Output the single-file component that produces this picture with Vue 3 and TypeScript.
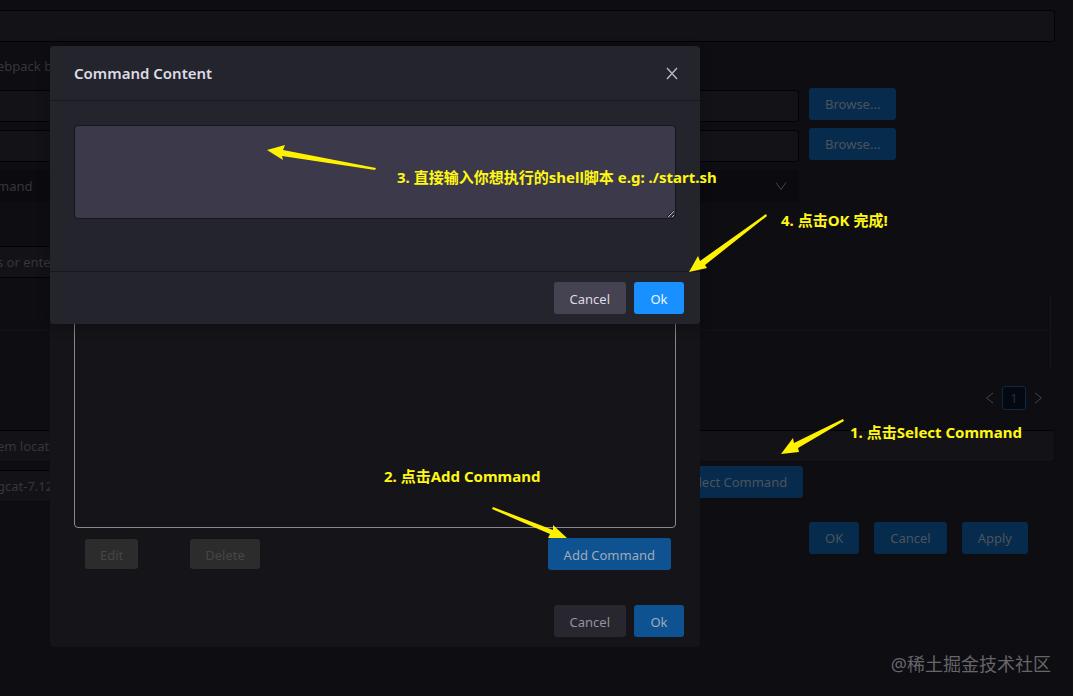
<script setup lang="ts">
import { ref } from 'vue'

interface Note {
  id: string
  text: string
}

const notes: Note[] = [
  { id: 'one', text: '1. 点击Select Command' },
  { id: 'two', text: '2. 点击Add Command' },
  { id: 'three', text: '3. 直接输入你想执行的shell脚本 e.g: ./start.sh' },
  { id: 'four', text: '4. 点击OK 完成!' },
]

const script = ref('')
const name = ref('')
const source = ref('')
const output = ref('')
const params = ref('s or ente')
const location = ref('em locat')
const version = ref('gcat-7.12')
</script>

<template>
  <div class="page">
    <form class="settings" @submit.prevent>
      <input v-model="name" class="field wide" aria-label="Name" />
      <p class="caption">ebpack b</p>
      <div class="row">
        <input v-model="source" class="field medium" aria-label="Source" />
        <button type="button" class="btn faint">Browse...</button>
      </div>
      <div class="row">
        <input v-model="output" class="field medium" aria-label="Output" />
        <button type="button" class="btn faint">Browse...</button>
      </div>
      <div class="select-wrap">
        <select class="select" aria-label="Type">
          <option>mand</option>
        </select>
        <svg class="chevron" viewBox="0 0 12 12" aria-hidden="true"><path d="M1 2.5 6 9.5 11 2.5" /></svg>
      </div>
      <input v-model="params" class="field short params" aria-label="Parameters" />
      <div class="grid">
        <div class="grid-head"></div>
        <div class="grid-body"></div>
      </div>
      <nav class="pager" aria-label="Pages">
        <button type="button" class="pager-step" aria-label="Previous">
          <svg viewBox="0 0 12 12"><path d="M9 1 2.5 6 9 11" /></svg>
        </button>
        <button type="button" class="pager-page">1</button>
        <button type="button" class="pager-step" aria-label="Next">
          <svg viewBox="0 0 12 12"><path d="M3 1 9.5 6 3 11" /></svg>
        </button>
      </nav>
      <input v-model="location" class="field wide soft" aria-label="Location" />
      <div class="row version-row">
        <input v-model="version" class="field version soft" aria-label="Version" />
        <button type="button" class="btn faint select-command">Select Command</button>
      </div>
      <div class="actions">
        <button type="button" class="btn faint">OK</button>
        <button type="button" class="btn faint">Cancel</button>
        <button type="button" class="btn faint">Apply</button>
      </div>
    </form>

    <section class="dialog list-dialog" role="dialog" aria-label="Select Command">
      <div class="command-list"></div>
      <div class="list-tools">
        <button type="button" class="btn disabled" disabled>Edit</button>
        <button type="button" class="btn disabled" disabled>Delete</button>
        <button type="button" class="btn dim add">Add Command</button>
      </div>
      <footer class="dialog-foot">
        <button type="button" class="btn dim-plain">Cancel</button>
        <button type="button" class="btn dim">Ok</button>
      </footer>
    </section>

    <section class="dialog content-dialog" role="dialog" aria-labelledby="content-title">
      <header class="dialog-head">
        <h2 id="content-title">Command Content</h2>
        <button type="button" class="close" aria-label="Close">
          <svg viewBox="0 0 12 14"><path d="M1 2 11 13M11 2 1 13" /></svg>
        </button>
      </header>
      <div class="dialog-body">
        <textarea v-model="script" class="script" aria-label="Command Content"></textarea>
      </div>
      <footer class="dialog-foot ruled">
        <button type="button" class="btn plain">Cancel</button>
        <button type="button" class="btn primary">Ok</button>
      </footer>
    </section>

    <svg class="arrows" width="1073" height="696" viewBox="0 0 1073 696" aria-hidden="true">
      <path d="M781 454 793 438 794 443 843 419 844 421 798 448 799 452Z" />
      <path d="M567 538 553 525 553 530 493 507 492 509 550 534 548 538Z" />
      <path d="M267 150 285 145 283 150 376 168 375 170 282 156 283 160Z" />
      <path d="M689 272 698 256 700 261 766 214 767 216 705 265 707 268Z" />
    </svg>
    <p v-for="note in notes" :key="note.id" class="note" :class="note.id">{{ note.text }}</p>
    <p class="watermark">@稀土掘金技术社区</p>
  </div>
</template>

<style>
html,
body,
#app {
  min-height: 100%;
  background: #0e0d12;
}
body {
  margin: 0;
  overflow: hidden;
}
</style>

<style scoped>
.page {
  position: relative;
  min-height: 100vh;
  box-sizing: border-box;
  overflow: hidden;
  background: #0e0d12;
  color: #36363b;
  font: 13px/20px "Noto Sans", "Noto Sans CJK SC", sans-serif;
}
button,
input,
select,
textarea {
  box-sizing: border-box;
  margin: 0;
  font: inherit;
  color: inherit;
}
p,
h2 {
  margin: 0;
}
.settings {
  display: flex;
  flex-direction: column;
  padding: 10px 18px 0 0;
}
.field {
  height: 32px;
  border: 1px solid #030206;
  border-left: 0;
  border-radius: 0 3px 3px 0;
  background: #131217;
  padding: 0;
}
.soft {
  border-right-color: #0b0a0f;
  border-bottom-color: #0b0a0f;
}
.field,
.select,
.caption {
  text-indent: -3px;
}
.wide {
  width: 100%;
}
.caption {
  padding: 14px 0 12px;
}
.row {
  display: flex;
  align-items: flex-start;
  gap: 10px;
  height: 40px;
}
.medium {
  width: 799px;
  margin-top: 2px;
}
.btn {
  height: 32px;
  min-width: 50px;
  padding: 0 16px;
  border: 0;
  border-radius: 3px;
  white-space: nowrap;
}
.dialog .btn {
  padding-top: 2px;
}
.faint {
  background: #072b4c;
  color: #4b545d;
}
.select-wrap {
  display: flex;
  align-items: center;
  width: 799px;
  height: 32px;
  margin-top: 2px;
}
.select {
  flex: 1;
  height: 32px;
  appearance: none;
  border: 0;
  border-radius: 3px;
  background: #0b0a0f;
  padding: 0;
}
.chevron {
  width: 12px;
  height: 12px;
  margin: 0 12px 0 -24px;
}
.chevron path,
.pager-step path {
  fill: none;
  stroke: #44444a;
  stroke-width: 1;
}
.short {
  width: 600px;
}
.params {
  margin-top: 44px;
}
.grid {
  margin: 17px 4px 0 0;
  border-right: 1px solid #17161b;
}
.grid-head {
  height: 35px;
  border-bottom: 1px solid #131217;
}
.grid-body {
  height: 37px;
}
.pager {
  display: flex;
  justify-content: flex-end;
  margin: 18px 5px 20px 0;
}
.pager-step,
.pager-page {
  width: 24px;
  height: 24px;
  padding: 0;
  border: 0;
  background: none;
}
.pager-page {
  border: 1px solid #08294a;
  border-radius: 3px;
  background: #06080f;
  color: #18324d;
}
.pager-step svg {
  display: block;
  width: 12px;
  height: 12px;
  margin: auto;
}
.version-row {
  margin-top: 4px;
}
.version {
  width: 600px;
  margin-top: 4px;
}
.select-command {
  margin-left: 58px;
}
.actions {
  display: flex;
  gap: 15px;
  margin: 16px 0 0 809px;
}
.dialog {
  position: absolute;
  left: 50px;
  width: 650px;
  box-sizing: border-box;
  border-radius: 4px;
}
.list-dialog {
  top: 46px;
  background: #151419;
}
.command-list {
  height: 404px;
  margin: 78px 24px 10px;
  box-sizing: border-box;
  border: 1px solid #89888f;
  border-radius: 4px;
}
.list-tools {
  display: flex;
  align-items: center;
  gap: 52px;
  padding: 0 29px 25px 35px;
}
.disabled {
  height: 30px;
  padding: 0 15px;
  background: #2c2c2d;
  color: #464648;
}
.dim {
  background: #0f5291;
  color: #a0abb8;
}
.add {
  margin-left: auto;
}
.dim-plain {
  background: #282730;
  color: #94939b;
}
.content-dialog {
  top: 46px;
  background: #24242d;
  color: #dddce6;
  box-shadow: 0 4px 12px #08070c66;
}
.dialog-head {
  display: flex;
  align-items: center;
  justify-content: space-between;
  height: 55px;
  box-sizing: border-box;
  padding: 0 22px 0 24px;
  border-bottom: 1px solid #191820;
}
.dialog-head h2 {
  font-size: 15px;
  line-height: 22px;
  font-weight: 600;
}
.close {
  width: 12px;
  height: 14px;
  padding: 0;
  border: 0;
  background: none;
}
.close svg {
  display: block;
}
.close path {
  fill: none;
  stroke: #b7b6c2;
  stroke-width: 1.4;
}
.dialog-body {
  padding: 24px 24px 52px;
}
.script {
  display: block;
  width: 100%;
  height: 94px;
  border: 1px solid #16151d;
  border-radius: 4px;
  background: #3c3a4a;
  padding: 4px 11px;
  color-scheme: dark;
}
.dialog-foot {
  display: flex;
  justify-content: flex-end;
  gap: 8px;
  padding: 10px 16px;
}
.ruled {
  border-top: 1px solid #191820;
}
.plain {
  background: #454352;
}
.primary {
  background: #1890ff;
  color: #f0f6ff;
}
.arrows {
  position: absolute;
  top: 0;
  left: 0;
  fill: #fff200;
  pointer-events: none;
}
.note {
  position: absolute;
  color: #fff714;
  font-size: 15px;
  line-height: 20px;
  font-weight: 700;
  white-space: nowrap;
}
.one {
  left: 850px;
  top: 422px;
}
.two {
  left: 384px;
  top: 466px;
}
.three {
  left: 397px;
  top: 167px;
}
.four {
  left: 781px;
  top: 210px;
}
.watermark {
  position: absolute;
  right: 22px;
  bottom: 20px;
  color: #65656a;
  font-size: 18px;
  line-height: 24px;
}
</style>
